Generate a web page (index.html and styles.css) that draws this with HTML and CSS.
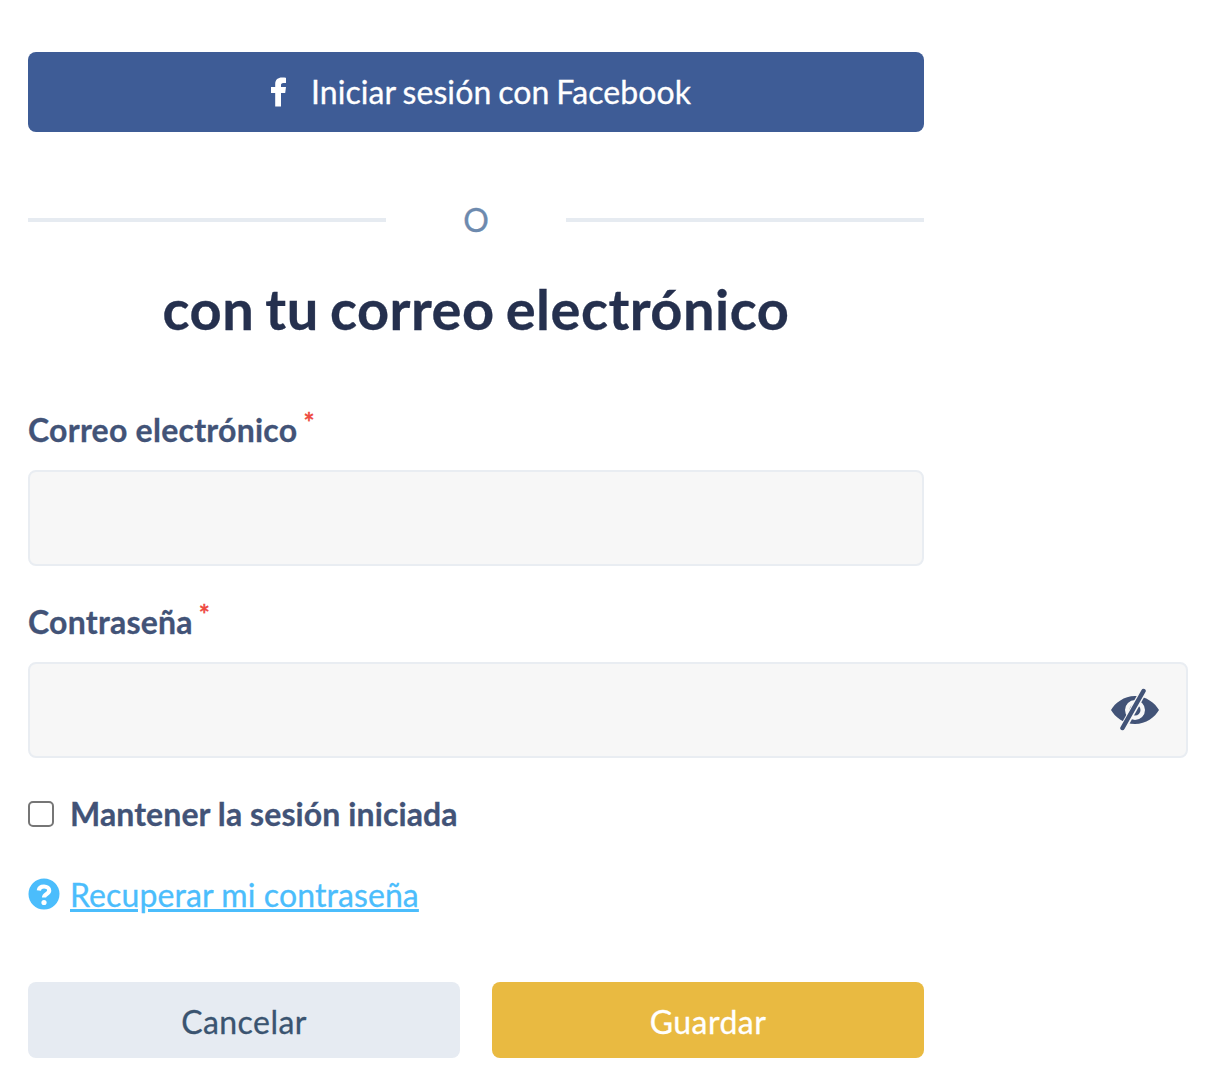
FILE: index.html
```html
<!DOCTYPE html>
<html lang="es">
<head>
    <meta charset="UTF-8">
    <title>Iniciar sesión</title>
    <link rel="stylesheet" href="styles.css">
</head>
<body>
    <form class="login-form">
        <button type="button" class="fb-btn">
            <svg class="fb-icon" viewBox="0 0 16 30" width="16" height="30">
                <path fill="#fff" d="M4.200 29.500V16H0v-6h4.200V7.200C4.200 2.600 7 .5 11 .5c1.900 0 3.300.1 4 .2v5.400h-2.600c-2 0-2.400.9-2.400 2.300V10h5l-.8 6h-4.200v13.500z"/>
            </svg>
            <span>Iniciar sesión con Facebook</span>
        </button>

        <div class="divider">
            <span class="divider-line"></span>
            <span class="divider-text">O</span>
            <span class="divider-line"></span>
        </div>

        <h2 class="form-title">con tu correo electrónico</h2>

        <div class="field">
            <label class="field-label" for="email">Correo electrónico<span class="required">*</span></label>
            <input class="field-input" id="email" type="text">
        </div>

        <div class="field field-wide">
            <label class="field-label" for="password">Contraseña<span class="required">*</span></label>
            <div class="password-wrap">
                <input class="field-input" id="password" type="password">
                <svg class="eye-icon" viewBox="0 0 48 44" width="48" height="44">
                    <path fill="#425377" fill-rule="evenodd" d="M24 8C35 8 44 15 48 22 44 29 35 36 24 36 13 36 4 29 0 22 4 15 13 8 24 8ZM24 12A10 10 0 1 0 24 32 10 10 0 1 0 24 12Z"/>
                    <path fill="#425377" d="M24 16.500A5.500 5.500 0 1 0 24 27.500 5.500 5.500 0 1 0 24 16.500Z"/>
                    <path stroke="#f7f7f7" stroke-width="7" d="M33 2 11 42"/>
                    <path stroke="#425377" stroke-width="4.500" stroke-linecap="round" d="M32.500 3 11.500 40"/>
                </svg>
            </div>
        </div>

        <label class="remember">
            <input class="remember-check" type="checkbox">
            <span>Mantener la sesión iniciada</span>
        </label>

        <div class="recover">
            <svg class="help-icon" viewBox="0 0 32 32" width="32" height="32">
                <circle cx="16" cy="16" r="15.500" fill="#4bbdfc"/>
                <path fill="none" stroke="#fff" stroke-width="4.200" d="M10.800 12.500c.3-2.700 2.400-4 5.200-4 3 0 5.200 1.600 5.200 4 0 3.500-5.200 3.300-5.200 7"/>
                <circle cx="16" cy="24.500" r="2.600" fill="#fff"/>
            </svg>
            <a class="recover-link" href="#">Recuperar mi contraseña</a>
        </div>

        <div class="actions">
            <button type="button" class="btn btn-cancel">Cancelar</button>
            <button type="button" class="btn btn-save">Guardar</button>
        </div>
    </form>
</body>
</html>
```

FILE: styles.css
```css
* {
    margin: 0;
    padding: 0;
    box-sizing: border-box;
}

body {
    font-family: Lato, 'Open Sans', sans-serif;
    background: #ffffff;
    color: #425377;
    -webkit-text-stroke: 0.3px;
}

.login-form {
    width: 1160px;
    margin: 52px 0 0 28px;
}

.fb-btn {
    width: 896px;
    height: 80px;
    display: flex;
    align-items: center;
    justify-content: center;
    gap: 24px;
    padding: 0 0 2px 10px;
    background: #3e5c96;
    color: #ffffff;
    border: none;
    border-radius: 8px;
    font-family: inherit;
    font-size: 32px;
    letter-spacing: 0.1px;
    word-spacing: -1.5px;
}

.fb-icon {
    flex: none;
    margin-top: 2px;
}

.divider {
    width: 896px;
    display: flex;
    align-items: center;
    margin-top: 68px;
    height: 40px;
}

.divider-line {
    flex: 1;
    height: 4px;
    background: #e6ebf1;
}

.divider-text {
    width: 180px;
    text-align: center;
    font-size: 32px;
    line-height: 38px;
    color: #6d8aae;
}

.form-title {
    width: 896px;
    margin-top: 35px;
    text-align: center;
    font-size: 56px;
    line-height: 68px;
    font-weight: 700;
    color: #25304e;
    letter-spacing: 0.5px;
    word-spacing: -3px;
}

.field {
    width: 896px;
    margin-top: 34px;
}

.form-title + .field {
    margin-top: 65px;
}

.field-wide {
    width: 1160px;
}

.field-label {
    display: block;
    font-size: 32px;
    line-height: 44px;
    font-weight: 700;
    letter-spacing: 0.25px;
    margin-bottom: 18px;
}

.required {
    color: #ee4a3f;
    font-size: 26px;
    line-height: 0;
    vertical-align: 10px;
    margin-left: 6px;
}

.field-input {
    display: block;
    width: 100%;
    height: 96px;
    background: #f7f7f7;
    border: 2px solid #e9edf2;
    border-radius: 8px;
}

.password-wrap {
    position: relative;
}

.eye-icon {
    position: absolute;
    right: 29px;
    top: 26px;
}

.remember {
    display: flex;
    align-items: center;
    gap: 16px;
    margin-top: 34px;
    font-size: 32px;
    line-height: 44px;
    font-weight: 700;
    letter-spacing: 0.1px;
}

.remember-check {
    appearance: none;
    width: 26px;
    height: 26px;
    background: #ffffff;
    border: 2px solid #767676;
    border-radius: 5px;
}

.recover {
    display: flex;
    align-items: center;
    gap: 10px;
    margin-top: 36px;
    height: 44px;
}

.recover-link {
    font-size: 32px;
    color: #4bbdfc;
    letter-spacing: 0.1px;
}

.actions {
    width: 896px;
    display: flex;
    gap: 32px;
    margin-top: 66px;
}

.btn {
    flex: 1;
    height: 76px;
    padding-top: 2px;
    border: none;
    border-radius: 8px;
    font-family: inherit;
    font-size: 32px;
    letter-spacing: 0.45px;
}

.btn-cancel {
    background: #e6ebf2;
    color: #3a5470;
}

.btn-save {
    background: #e9ba41;
    color: #ffffff;
}
```
